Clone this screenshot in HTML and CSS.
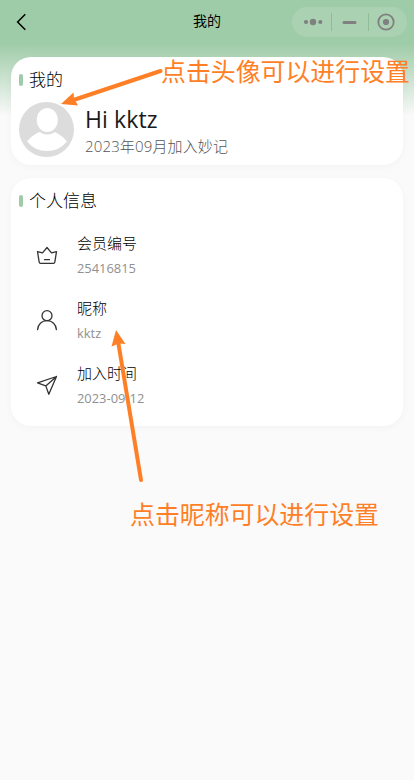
FILE: index.html
```html
<!DOCTYPE html>
<html lang="zh-CN">
<head>
<meta charset="utf-8">
<title>我的</title>
<link rel="stylesheet" href="styles.css">
</head>
<body>
<header class="navbar">
  <svg class="back" width="12" height="18" viewBox="0 0 12 18"><path d="M9.3 1.3 1.6 9l7.7 7.7"/></svg>
  <h1 class="nav-title">我的</h1>
  <div class="capsule">
    <svg width="39" height="30" viewBox="0 0 39 30"><circle cx="14" cy="15" r="2.1"/><circle cx="21" cy="15" r="3.2"/><circle cx="28.3" cy="15" r="2.1"/></svg>
    <svg class="split" width="37" height="30" viewBox="0 0 37 30"><rect x="11.500" y="14" width="14" height="3" rx="1.5"/></svg>
    <svg class="split" width="37" height="30" viewBox="0 0 37 30"><circle class="ring" cx="18" cy="15" r="7.7"/><circle cx="18" cy="15" r="3.1"/></svg>
  </div>
</header>
<main class="content">
  <section class="card profile">
    <h2 class="heading">我的</h2>
    <div class="user">
      <svg class="avatar" width="55" height="55" viewBox="0 0 55 55">
        <circle cx="27.5" cy="27.5" r="27.5" fill="#dcdcdc"/>
        <path d="M8 39.500Q17 28.500 28 28.500T48 39.500Q40 49 28 49T8 39.500Z" fill="#fff"/>
        <ellipse cx="28.300" cy="18.500" rx="13" ry="14" fill="#dcdcdc"/>
        <ellipse cx="28.300" cy="18" rx="10.500" ry="12" fill="#fff"/>
      </svg>
      <div class="user-text">
        <div class="greeting">Hi kktz</div>
        <div class="joined">2023年09月加入妙记</div>
      </div>
    </div>
  </section>
  <section class="card info">
    <h2 class="heading">个人信息</h2>
    <div class="row">
      <svg class="icon" width="22" height="22" viewBox="0 0 22 22"><path d="M1.500 6.600 6.500 7.900 11 2.500l4.500 5.400 5-1.300-1.700 10.600q-.2 1.100-1.300 1.100H4.500q-1.100 0-1.300-1.100ZM8.500 14.600h5"/></svg>
      <div><div class="label">会员编号</div><div class="value">25416815</div></div>
    </div>
    <div class="row">
      <svg class="icon" width="22" height="22" viewBox="0 0 22 22"><circle cx="11" cy="5.700" r="5"/><path d="M1.600 19.600c.3-5.200 4-8.900 9.400-8.900s9.100 3.700 9.400 8.900"/></svg>
      <div><div class="label">昵称</div><div class="value">kktz</div></div>
    </div>
    <div class="row">
      <svg class="icon" width="22" height="22" viewBox="0 0 22 22"><path d="M20.500 1.500 1.500 7.900 9.800 10.900 12.800 19.300ZM20.500 1.500 9.800 10.900"/></svg>
      <div><div class="label">加入时间</div><div class="value">2023-09-12</div></div>
    </div>
  </section>
</main>
<svg class="arrows" width="414" height="780" viewBox="0 0 414 780">
  <path class="shaft" d="M160.500 71 72 100.500M141 480 118.500 344"/>
  <path class="tip" d="M61 104 73.500 92.500 74 98.500 78 105.500ZM116 330 125.500 344 119 343.500 111.500 346.500Z"/>
</svg>
<div class="note note-avatar">点击头像可以进行设置</div>
<div class="note note-name">点击昵称可以进行设置</div>
</body>
</html>
```
FILE: styles.css
```css
* { box-sizing: border-box; }
body {
  margin: 0;
  position: relative;
  height: 780px;
  overflow: hidden;
  font-family: "Open Sans", "Noto Sans CJK SC", sans-serif;
  color: #1a1a1a;
  background: #fafafa linear-gradient(#9fcca8 0, #9fcca8 44px, #fafafa 116px) no-repeat;
}
h1, h2 { margin: 0; font-weight: 300; }
.navbar {
  height: 44px;
  display: grid;
  grid-template-columns: 122px 1fr 122px;
  align-items: center;
}
.back { margin-left: 16px; fill: none; stroke: #000; stroke-width: 1.5; }
.nav-title { text-align: center; font-size: 14px; line-height: 20px; font-weight: 400; color: #000; margin-top: -2px; }
.capsule {
  display: flex;
  width: 115px;
  height: 30px;
  border-radius: 15px;
  background: #aad2b2;
  overflow: hidden;
  fill: #7f807f;
}
.split { background: linear-gradient(#91bc9a, #91bc9a) 0 6px / 1px 18px no-repeat; }
.ring { fill: none; stroke: #7f807f; stroke-width: 1.8; }
.content {
  display: flex;
  flex-direction: column;
  gap: 13px;
  padding: 13px 11px;
}
.card {
  border-radius: 20px;
  background: #fff;
  padding: 13px 8px;
  box-shadow: 0 2px 8px rgba(0, 0, 0, .03);
}
.profile { height: 108px; }
.info { height: 248px; }
.heading {
  display: flex;
  align-items: center;
  gap: 6px;
  height: 20px;
  font-size: 17px;
  line-height: 20px;
  color: #000;
}
.heading::before { content: ""; width: 4px; height: 12px; border-radius: 2px; background: #9fcca8; }
.user { display: flex; margin-top: 12px; gap: 11px; }
.user-text { padding-top: 1px; }
.greeting { font-size: 23px; line-height: 32px; letter-spacing: .1px; }
.joined { margin-top: 1px; font-size: 15px; line-height: 20px; font-weight: 300; letter-spacing: .15px; color: #555; }
.row { display: flex; height: 65px; padding-left: 17px; gap: 19px; }
.heading + .row { margin-top: 21px; }
.icon { margin-top: 13px; fill: none; stroke: #333; stroke-width: 1.3; stroke-linejoin: round; stroke-linecap: round; }
.label { font-size: 15px; line-height: 22px; font-weight: 300; color: #000; }
.value { margin-top: 5px; font-size: 12.9px; line-height: 18px; color: #909090; }
.arrows { position: absolute; left: 0; top: 0; }
.shaft { fill: none; stroke: #ff7f27; stroke-width: 4; stroke-linecap: round; }
.tip { fill: #ff7f27; }
.note {
  position: absolute;
  font-family: "Noto Sans CJK SC", sans-serif;
  font-size: 24.9px;
  line-height: 32px;
  white-space: nowrap;
  color: #ff7f27;
}
.note-avatar { left: 161px; top: 54px; }
.note-name { left: 130px; top: 497px; }
```
